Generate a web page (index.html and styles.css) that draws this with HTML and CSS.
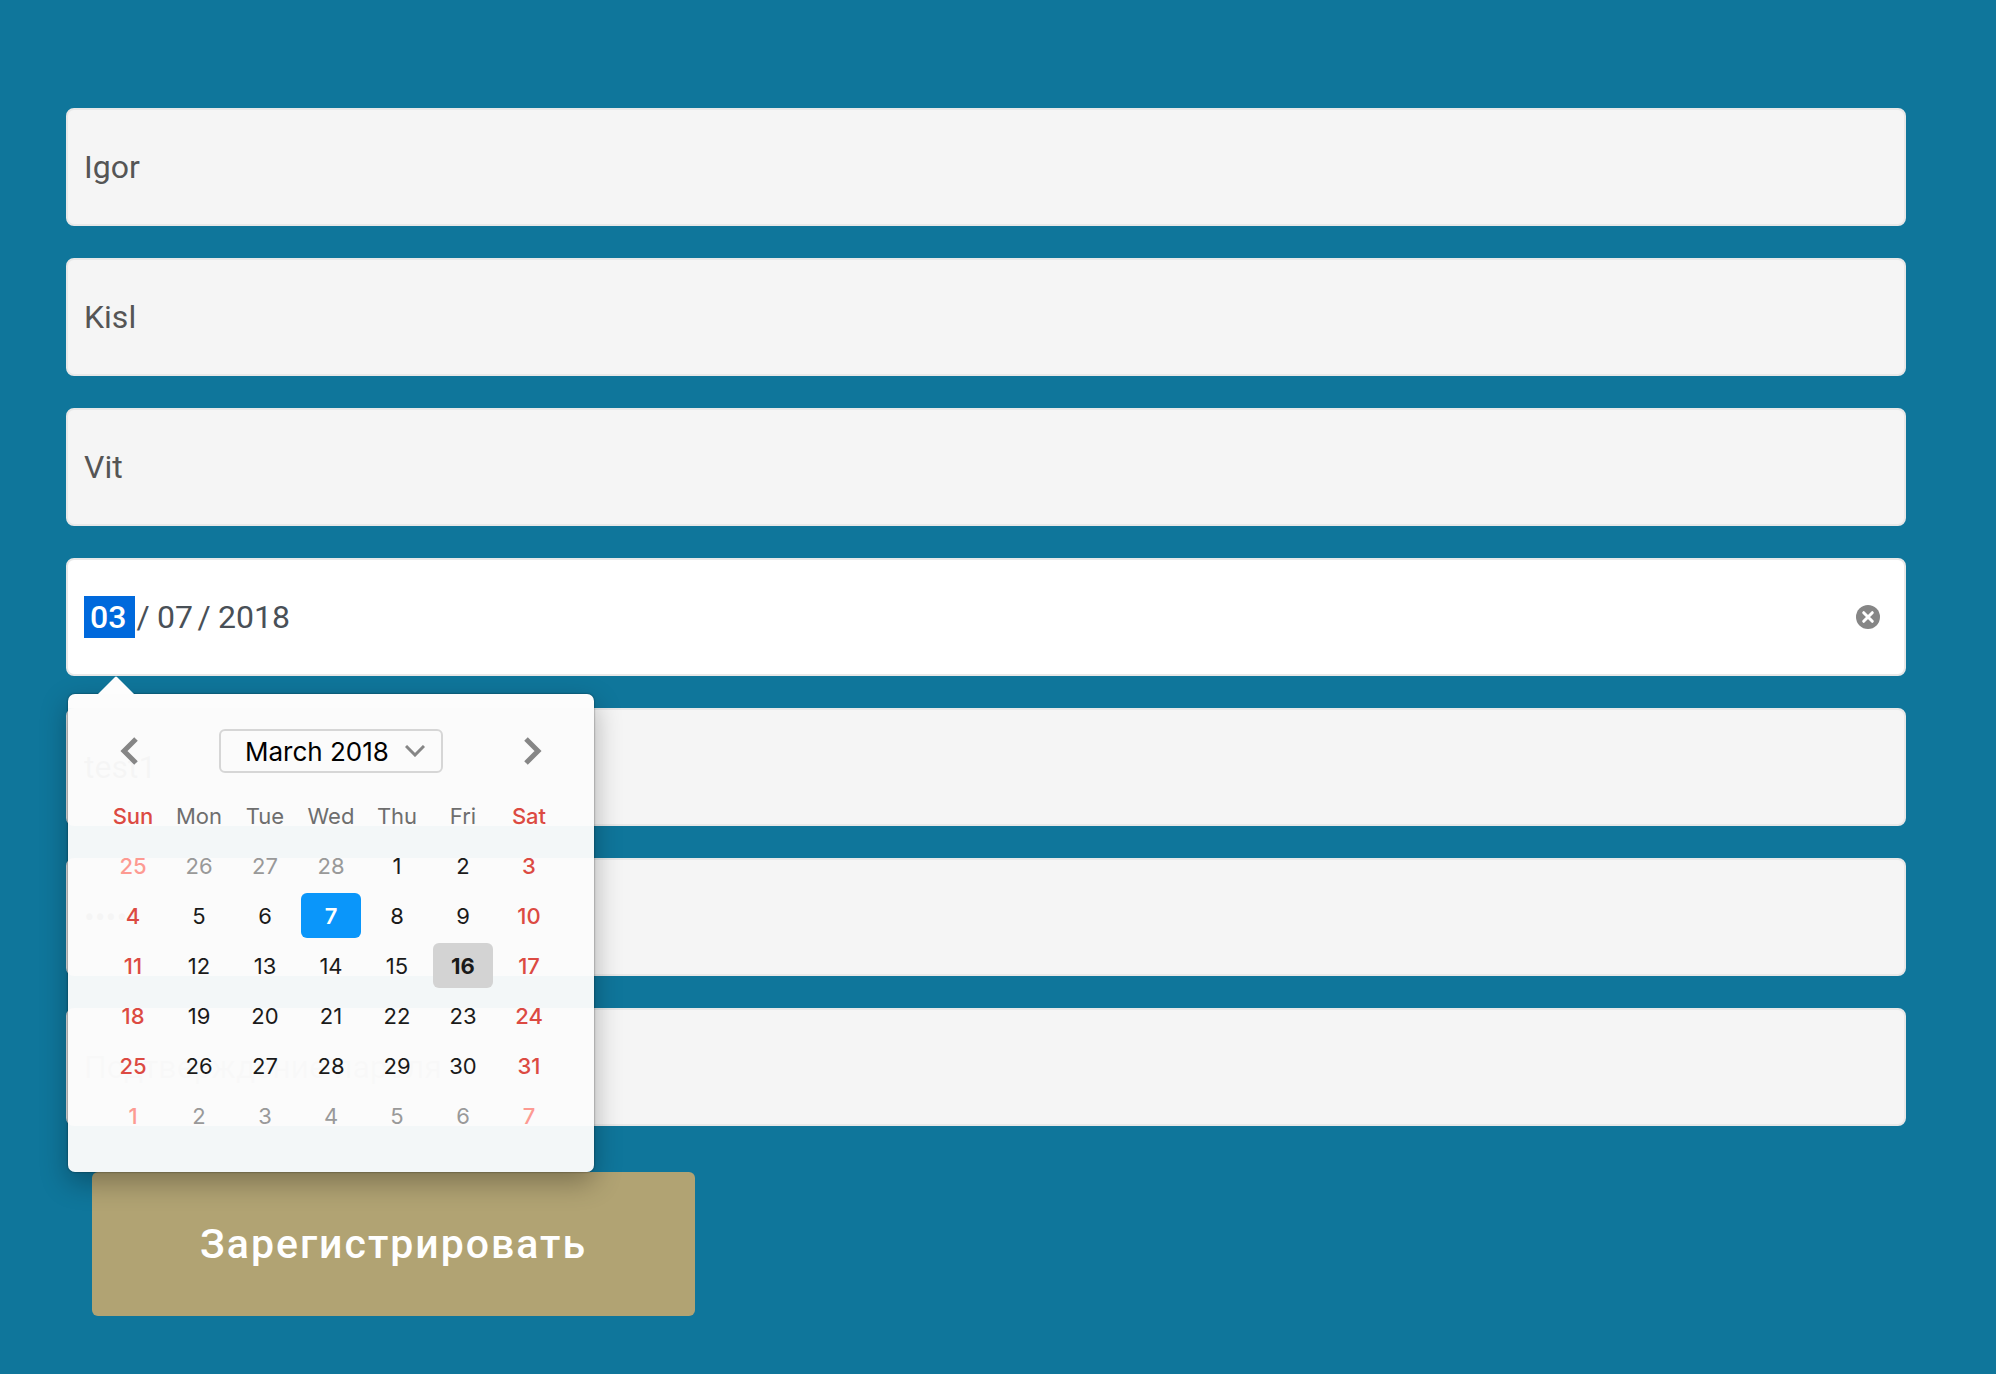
FILE: index.html
```html
<!DOCTYPE html>
<html lang="ru">
<head>
<meta charset="utf-8">
<title>Регистрация</title>
<link rel="stylesheet" href="styles.css">
</head>
<body>
<form class="form">
  <div class="fields">
    <input class="field" type="text" aria-label="Имя" value="Igor">
    <input class="field" type="text" aria-label="Фамилия" value="Kisl">
    <input class="field" type="text" aria-label="Отчество" value="Vit">
    <div class="field date" role="group" aria-label="Дата рождения">
      <input class="seg seg-active" type="text" aria-label="Month" value="03">
      <span class="slash">/</span>
      <input class="seg" type="text" aria-label="Day" value="07">
      <span class="slash">/</span>
      <input class="seg seg-year" type="text" aria-label="Year" value="2018">
      <button class="clear" type="button" aria-label="Clear">
        <svg width="24" height="24" viewBox="0 0 24 24"><circle cx="12" cy="12" r="12" fill="#868686"/><path d="M7.700 7.700l8.600 8.600M16.300 7.700l-8.600 8.600" stroke="#fff" stroke-width="3" stroke-linecap="round"/></svg>
      </button>
      <div class="picker">
        <svg class="tip" width="36" height="18" viewBox="0 0 36 18"><path d="M0 18L17 1Q18 0 19 1L36 18Z" fill="#fdfdfd"/></svg>
        <div class="picker-head">
          <button class="nav" type="button" aria-label="Previous month">
            <svg width="18" height="28" viewBox="0 0 18 28"><path d="M16 2L4 14L16 26" fill="none" stroke="#868686" stroke-width="5"/></svg>
          </button>
          <div class="month">
            <select class="month-select" aria-label="Month and year"><option>March 2018</option></select>
            <svg class="chevron" width="20" height="12" viewBox="0 0 20 12"><path d="M1 1L10 10L19 1" fill="none" stroke="#868686" stroke-width="3"/></svg>
          </div>
          <button class="nav" type="button" aria-label="Next month">
            <svg width="18" height="28" viewBox="0 0 18 28"><path d="M2 2L14 14L2 26" fill="none" stroke="#868686" stroke-width="5"/></svg>
          </button>
        </div>
        <table class="calendar">
          <thead>
            <tr><th>Sun</th><th>Mon</th><th>Tue</th><th>Wed</th><th>Thu</th><th>Fri</th><th>Sat</th></tr>
          </thead>
          <tbody>
            <tr><td class="out">25</td><td class="out">26</td><td class="out">27</td><td class="out">28</td><td>1</td><td>2</td><td>3</td></tr>
            <tr><td>4</td><td>5</td><td>6</td><td class="selected">7</td><td>8</td><td>9</td><td>10</td></tr>
            <tr><td>11</td><td>12</td><td>13</td><td>14</td><td>15</td><td class="today">16</td><td>17</td></tr>
            <tr><td>18</td><td>19</td><td>20</td><td>21</td><td>22</td><td>23</td><td>24</td></tr>
            <tr><td>25</td><td>26</td><td>27</td><td>28</td><td>29</td><td>30</td><td>31</td></tr>
            <tr><td class="out">1</td><td class="out">2</td><td class="out">3</td><td class="out">4</td><td class="out">5</td><td class="out">6</td><td class="out">7</td></tr>
          </tbody>
        </table>
      </div>
    </div>
    <input class="field" type="text" aria-label="Логин" value="test1">
    <input class="field" type="password" aria-label="Пароль" value="test1">
    <input class="field" type="password" aria-label="Подтверждение пароля" placeholder="Подтверждение пароля">
  </div>
  <button class="submit" type="submit">Зарегистрировать</button>
</form>
</body>
</html>
```
FILE: styles.css
```css
* { box-sizing: border-box; }

body {
  margin: 0;
  background: #0f769b;
  font-family: Roboto, "Liberation Sans", sans-serif;
}

button, input, select { font: inherit; }

button {
  border: 0;
  background: none;
  padding: 0;
  cursor: pointer;
}

svg { display: block; }

.form { padding: 108px 90px 58px 66px; }

.fields {
  display: flex;
  flex-direction: column;
  gap: 32px;
}

.field {
  width: 100%;
  height: 118px;
  padding: 0 16px;
  border: 2px solid #e8e8e8;
  border-radius: 8px;
  background: #f5f5f5;
  color: #555;
  font-size: 32px;
  outline: 0;
}

.field::placeholder { color: #aaa; }

/* Date field */
.date {
  position: relative;
  display: flex;
  align-items: center;
  padding-right: 24px;
  background: #fff;
  color: #495057;
}

.seg {
  width: 45px;
  height: 42px;
  padding: 0 0 0 6px;
  border: 0;
  background: none;
  color: inherit;
  outline: 0;
}

.seg-active {
  width: 51px;
  background: #0069dc;
  color: #fff;
  font-weight: 500;
}

.seg-year { width: 90px; }

.slash {
  width: 16px;
  text-align: center;
}

.clear { margin-left: auto; }

/* Calendar popup */
.picker {
  position: absolute;
  top: 134px;
  left: 0;
  z-index: 1;
  padding: 35px 32px 29px;
  border-radius: 7px;
  background:
    linear-gradient(#fcfcfc 14px, transparent 14px),
    rgba(251, 251, 251, 0.97);
  box-shadow: 0 0 2px rgba(0, 0, 0, 0.6), 0 10px 28px rgba(0, 0, 0, 0.3);
  font-family: Inter, "Liberation Sans", sans-serif;
}

.tip {
  position: absolute;
  top: -18px;
  left: 30px;
}

.picker-head {
  display: flex;
  align-items: center;
  justify-content: space-between;
  padding: 0 20px;
  margin-bottom: 15px;
}

.month {
  display: grid;
  align-items: center;
  width: 224px;
}

.month-select {
  grid-area: 1 / 1;
  height: 44px;
  padding: 0 44px 0 24px;
  border: 2px solid #d6d6d6;
  border-radius: 6px;
  background: none;
  color: #000;
  font-size: 26px;
  appearance: none;
}

.chevron {
  grid-area: 1 / 1;
  justify-self: end;
  margin-right: 18px;
  pointer-events: none;
}

.calendar {
  border-spacing: 6px 5px;
  margin: 0 -3px;
  table-layout: fixed;
  width: 468px;
  font-size: 22px;
}

.calendar th,
.calendar td {
  height: 45px;
  padding: 0;
  border-radius: 6px;
  text-align: center;
  color: #1a1a1a;
}

.calendar th {
  font-weight: 400;
  color: #6e6e6e;
}

.calendar td.out { color: #999; }

.calendar :is(th, td):first-child,
.calendar :is(th, td):last-child {
  color: #dc4a42;
  font-weight: 500;
}

.calendar td.out:first-child,
.calendar td.out:last-child { color: #fd9a92; }

.calendar td.selected {
  background: #0a96fa;
  color: #fff;
  font-weight: 600;
}

.calendar td.today {
  background: #d3d3d3;
  font-weight: 700;
}

.submit {
  display: block;
  width: 603px;
  max-width: 100%;
  height: 144px;
  margin: 46px 0 0 26px;
  border-radius: 6px;
  background: #b1a373;
  color: #fff;
  font-size: 41px;
  font-weight: 500;
  letter-spacing: 2px;
}
```
